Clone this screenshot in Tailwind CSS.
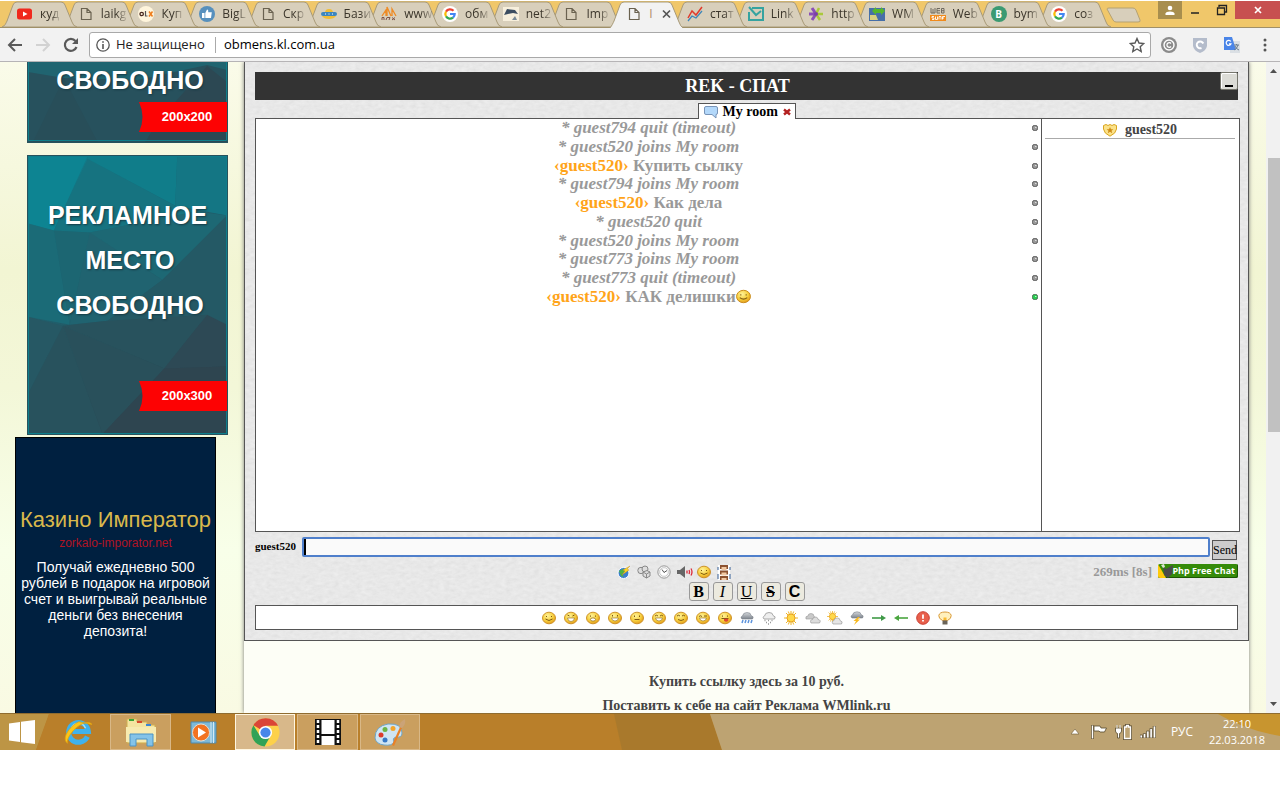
<!DOCTYPE html>
<html lang="ru">
<head>
<meta charset="utf-8">
<title>REK - СПАТ</title>
<script src="https://cdn.jsdelivr.net/npm/@tailwindcss/browser@4"></script>
</head>
<body class="bg-white font-['Liberation_Sans',sans-serif]">

<svg class="absolute size-0" aria-hidden="true">
  <defs>
    <radialGradient id="gold" cx="40%" cy="32%" r="70%"><stop offset="0" stop-color="#fff29a"/><stop offset=".6" stop-color="#f6cf3e"/><stop offset="1" stop-color="#e29a1a"/></radialGradient>
    <linearGradient id="cloudg" x1="0" y1="0" x2="0" y2="1"><stop offset="0" stop-color="#d5d8dc"/><stop offset="1" stop-color="#7d848d"/></linearGradient>
    <symbol id="tab" viewBox="0 0 75 26"><path d="M0 26C3 25 4 22 5 20L11 4Q12 1 15 1H59Q62 1 63 4L70 21Q71 25 75 26Z" fill="#d8cfbb" stroke="#a89a78"/></symbol>
    <symbol id="tabon" viewBox="0 0 75 27"><path d="M0 28C3 25 4 22 5 20L11 4Q12 1 15 1H59Q62 1 63 4L70 21Q71 25 75 28Z" fill="#f2f2f2" stroke="#a89a78"/></symbol>
    <symbol id="page" viewBox="0 0 16 16"><path d="M3.500 2.500H9L13 6.500V13.500H3.500Z M9 2.500V6.500H13" fill="none" stroke="#6a6250" stroke-width="1.200"/></symbol>
    <symbol id="google" viewBox="0 0 16 16"><circle cx="8" cy="8" r="8" fill="#fff"/><g fill="none" stroke-width="2.200"><path d="M11.500 4.800A4.700 4.700 0 0 0 4 5.600" stroke="#ea4335"/><path d="M4 5.600A4.700 4.700 0 0 0 4 10.400" stroke="#fbbc05"/><path d="M4 10.400A4.700 4.700 0 0 0 11 11.600" stroke="#34a853"/><path d="M11 11.600A4.700 4.700 0 0 0 12.700 8H8" stroke="#4285f4"/></g></symbol>
    <symbol id="face" viewBox="0 0 14 14"><ellipse cx="7" cy="7" rx="6.500" ry="5.800" fill="url(#gold)" stroke="#c98a1c" stroke-width=".9"/></symbol>
    <symbol id="smile" viewBox="0 0 14 14"><use href="#face"/><path d="M4.500 5v1M9.500 5v1M3.500 8Q7 11 10.500 8" fill="none" stroke="#805a10" stroke-width="1"/></symbol>
    <symbol id="grin" viewBox="0 0 14 14"><use href="#face"/><path d="M3.500 4l2 1M10.500 4l-2 1" stroke="#805a10"/><path d="M3.500 7H10.500Q10 10.500 7 10.500T3.500 7Z" fill="#fff" stroke="#8a641a" stroke-width=".6"/></symbol>
    <symbol id="rain" viewBox="0 0 14 14"><path d="M2 8Q-.3 6 2.500 5Q3 1.500 7 1.500T11 4.500Q14.500 5.500 12.500 8Z" fill="url(#cloudg)" stroke="#7c838b" stroke-width=".6"/></symbol>
    <symbol id="sun" viewBox="0 0 14 14"><path d="M7 0V14M0 7H14M2 2L12 12M12 2L2 12M4.300.5L9.700 13.500M9.700.5L4.300 13.500" stroke="#eeb52b" stroke-width="1"/><circle cx="7" cy="7" r="4" fill="#ffd84a" stroke="#e9a31e"/></symbol>
    <symbol id="dot" viewBox="0 0 6 6"><rect x=".5" y=".5" width="5" height="5" rx="1.800" fill="#999" stroke="#5d5d5d"/><path d="M3 2h1.500v1H3z" fill="#ddd"/></symbol>
    <linearGradient id="tealg" x1="0" y1="0" x2=".5" y2="1"><stop offset="0" stop-color="#0d8391"/><stop offset=".5" stop-color="#205f6c"/><stop offset="1" stop-color="#2e444f"/></linearGradient>
  </defs>
</svg>

<!-- tab strip -->
<header>
  <div class="flex h-7 border-t border-b border-t-white border-b-[#a09068] bg-[#f0c76a] pl-[2px] font-['Open_Sans',sans-serif] text-[12px] text-[#3b352a]">
    <nav class="flex min-w-0 flex-1" aria-label="Вкладки">
      <a href="#" class="relative z-[18] flex min-w-0 flex-1 items-center gap-[7px] pl-[15px]"><svg class="absolute left-0 top-0 h-[26px] w-[75px]"><use href="#tab"/></svg><svg class="relative size-4 shrink-0" viewBox="0 0 16 16"><rect x="0" y="2.500" width="15" height="11" rx="2.500" fill="#f0291d"/><path d="M6 5.500v5l4.500-2.500z" fill="#fff"/></svg><span class="relative shrink-0 whitespace-nowrap [mask-image:linear-gradient(90deg,#000_60%,#0003)]">куд</span></a>
      <a href="#" class="relative z-[17] flex min-w-0 flex-1 items-center gap-[7px] pl-[15px]"><svg class="absolute left-0 top-0 h-[26px] w-[75px]"><use href="#tab"/></svg><svg class="relative size-4 shrink-0"><use href="#page"/></svg><span class="relative shrink-0 whitespace-nowrap [mask-image:linear-gradient(90deg,#000_60%,#0003)]">laikg</span></a>
      <a href="#" class="relative z-[16] flex min-w-0 flex-1 items-center gap-[7px] pl-[15px]"><svg class="absolute left-0 top-0 h-[26px] w-[75px]"><use href="#tab"/></svg><svg class="relative size-4 shrink-0" viewBox="0 0 16 16"><circle cx="8" cy="8" r="8" fill="#fff5dc"/><circle cx="3.700" cy="8" r="1.700" fill="none" stroke="#4a2a20" stroke-width="1.300"/><path d="M7.500 5v5h2" fill="none" stroke="#555" stroke-width="1.200"/><path d="M11 5.500l3.500 5M14.500 5.500l-3.500 5" stroke="#ee7d1d" stroke-width="1.500"/></svg><span class="relative shrink-0 whitespace-nowrap [mask-image:linear-gradient(90deg,#000_60%,#0003)]">Куп</span></a>
      <a href="#" class="relative z-[15] flex min-w-0 flex-1 items-center gap-[7px] pl-[15px]"><svg class="absolute left-0 top-0 h-[26px] w-[75px]"><use href="#tab"/></svg><svg class="relative size-4 shrink-0" viewBox="0 0 16 16"><circle cx="8" cy="8" r="8" fill="#5790bd"/><path d="M3 7h2.500v5H3zM6.300 7L8 3.500Q9.500 3 9.300 6.300H12.800L12 12H6.300z" fill="#fff"/></svg><span class="relative shrink-0 whitespace-nowrap [mask-image:linear-gradient(90deg,#000_60%,#0003)]">BigL</span></a>
      <a href="#" class="relative z-[14] flex min-w-0 flex-1 items-center gap-[7px] pl-[15px]"><svg class="absolute left-0 top-0 h-[26px] w-[75px]"><use href="#tab"/></svg><svg class="relative size-4 shrink-0"><use href="#page"/></svg><span class="relative shrink-0 whitespace-nowrap [mask-image:linear-gradient(90deg,#000_60%,#0003)]">Скр</span></a>
      <a href="#" class="relative z-[13] flex min-w-0 flex-1 items-center gap-[7px] pl-[15px]"><svg class="absolute left-0 top-0 h-[26px] w-[75px]"><use href="#tab"/></svg><svg class="relative size-4 shrink-0" viewBox="0 0 16 16"><path d="M4 7Q4 3 8 3T12 7z" fill="#f2bd35"/><rect x="0" y="6" width="16" height="4" rx="2" fill="#3d86be"/><path d="M1 10H15Q13 13 8 13T1 10z" fill="#f2bd35"/><path d="M4 8h1M7.500 8h1M11 8h1" stroke="#fff"/></svg><span class="relative shrink-0 whitespace-nowrap [mask-image:linear-gradient(90deg,#000_60%,#0003)]">Бази</span></a>
      <a href="#" class="relative z-[12] flex min-w-0 flex-1 items-center gap-[7px] pl-[15px]"><svg class="absolute left-0 top-0 h-[26px] w-[75px]"><use href="#tab"/></svg><svg class="relative size-4 shrink-0" viewBox="0 0 16 16"><path d="M1 10L5 4v6M6 10V1l4 9M11 10V3l4 7" fill="none" stroke="#ee8b25" stroke-width="1.300"/><path d="M1 14v-2.500h2V14M5 14l1-2.500h3L8 14M11 11.500l3 2.500M14 11.500L11 14" fill="none" stroke="#7c5348"/></svg><span class="relative shrink-0 whitespace-nowrap [mask-image:linear-gradient(90deg,#000_60%,#0003)]">www</span></a>
      <a href="#" class="relative z-[11] flex min-w-0 flex-1 items-center gap-[7px] pl-[15px]"><svg class="absolute left-0 top-0 h-[26px] w-[75px]"><use href="#tab"/></svg><svg class="relative size-4 shrink-0"><use href="#google"/></svg><span class="relative shrink-0 whitespace-nowrap [mask-image:linear-gradient(90deg,#000_60%,#0003)]">обм</span></a>
      <a href="#" class="relative z-[10] flex min-w-0 flex-1 items-center gap-[7px] pl-[15px]"><svg class="absolute left-0 top-0 h-[26px] w-[75px]"><use href="#tab"/></svg><svg class="relative size-4 shrink-0" viewBox="0 0 16 16"><rect y="1" width="16" height="14" fill="#f7efdc"/><path d="M1 9L4 3l8 1 3 4-5-1-5 1z" fill="#3c4d60"/><path d="M9 14l3-4 2 4z" fill="#7a8a97"/></svg><span class="relative shrink-0 whitespace-nowrap [mask-image:linear-gradient(90deg,#000_60%,#0003)]">net2</span></a>
      <a href="#" class="relative z-[9] flex min-w-0 flex-1 items-center gap-[7px] pl-[15px]"><svg class="absolute left-0 top-0 h-[26px] w-[75px]"><use href="#tab"/></svg><svg class="relative size-4 shrink-0"><use href="#page"/></svg><span class="relative shrink-0 whitespace-nowrap [mask-image:linear-gradient(90deg,#000_60%,#0003)]">Imp</span></a>
      <a href="#" aria-current="page" class="relative z-20 flex min-w-0 flex-1 items-center gap-[7px] pl-[17px]"><svg class="absolute left-0 top-0 h-[27px] w-[75px]"><use href="#tabon"/></svg><svg class="relative size-4 shrink-0"><use href="#page"/></svg><span class="relative shrink-0 text-[#b08a6a]">I</span><svg class="relative size-3 shrink-0" viewBox="0 0 12 12"><path d="M3 2.500l7 7M10 2.500l-7 7" stroke="#555" stroke-width="1.700"/></svg></a>
      <a href="#" class="relative z-[8] flex min-w-0 flex-1 items-center gap-[7px] pl-[15px]"><svg class="absolute left-0 top-0 h-[26px] w-[75px]"><use href="#tab"/></svg><svg class="relative size-4 shrink-0" viewBox="0 0 16 16"><path d="M1 12L5 5l4 4 6-8" fill="none" stroke="#e03a2c" stroke-width="1.500"/><path d="M1 15l4-5 4 2 6-7" fill="none" stroke="#3e86b8" stroke-width="1.300"/></svg><span class="relative shrink-0 whitespace-nowrap [mask-image:linear-gradient(90deg,#000_60%,#0003)]">стат</span></a>
      <a href="#" class="relative z-[7] flex min-w-0 flex-1 items-center gap-[7px] pl-[15px]"><svg class="absolute left-0 top-0 h-[26px] w-[75px]"><use href="#tab"/></svg><svg class="relative size-4 shrink-0" viewBox="0 0 16 16"><path d="M1 6V14H15V2H4M1 1l7 8 5-4" fill="none" stroke="#35a3a0" stroke-width="2"/></svg><span class="relative shrink-0 whitespace-nowrap [mask-image:linear-gradient(90deg,#000_60%,#0003)]">Link</span></a>
      <a href="#" class="relative z-[6] flex min-w-0 flex-1 items-center gap-[7px] pl-[15px]"><svg class="absolute left-0 top-0 h-[26px] w-[75px]"><use href="#tab"/></svg><svg class="relative size-4 shrink-0" viewBox="0 0 16 16"><path d="M8 8H1M8 8L4 2M8 8L4 14" stroke="#8a4fb8" stroke-width="3"/><path d="M8 8h7M8 8l3-6M8 8l4 6" stroke="#a9c93a" stroke-width="2.500"/><circle cx="8" cy="8" r="2" fill="#7b3fa8"/></svg><span class="relative shrink-0 whitespace-nowrap [mask-image:linear-gradient(90deg,#000_60%,#0003)]">http</span></a>
      <a href="#" class="relative z-[5] flex min-w-0 flex-1 items-center gap-[7px] pl-[15px]"><svg class="absolute left-0 top-0 h-[26px] w-[75px]"><use href="#tab"/></svg><svg class="relative size-4 shrink-0" viewBox="0 0 16 16"><rect y="2" width="16" height="13" fill="#466fa8"/><path d="M1 9h6l2 5H1z" fill="#d8d080"/><path d="M3 5l4-4v2h5V1l4 4-4 4V7H7v2z" fill="#55b62c"/></svg><span class="relative shrink-0 whitespace-nowrap [mask-image:linear-gradient(90deg,#000_60%,#0003)]">WM</span></a>
      <a href="#" class="relative z-[4] flex min-w-0 flex-1 items-center gap-[7px] pl-[15px]"><svg class="absolute left-0 top-0 h-[26px] w-[75px]"><use href="#tab"/></svg><svg class="relative size-4 shrink-0" viewBox="0 0 16 16"><path d="M1 2v5h4V2M3 3v4M10 2.500H7V7h3M7 4.700h3M11.500 2.500H14V7h-2.500zM11.500 4.700H14" fill="none" stroke="#6f6a60"/><rect y="9" width="16" height="6" fill="#f08a1c"/><path d="M4 10.500H2V12h2v1.500H2M5.500 10.500v3h2v-3M9 13.500v-3h2v3M12.500 13.500v-3H15M12.500 12H14" fill="none" stroke="#fff" stroke-width=".9"/></svg><span class="relative shrink-0 whitespace-nowrap [mask-image:linear-gradient(90deg,#000_60%,#0003)]">Web</span></a>
      <a href="#" class="relative z-[3] flex min-w-0 flex-1 items-center gap-[7px] pl-[15px]"><svg class="absolute left-0 top-0 h-[26px] w-[75px]"><use href="#tab"/></svg><span class="relative grid size-4 shrink-0 place-items-center rounded-full bg-[#3c9a72] text-[10px] font-bold text-white">B</span><span class="relative shrink-0 whitespace-nowrap [mask-image:linear-gradient(90deg,#000_60%,#0003)]">bym</span></a>
      <a href="#" class="relative z-[2] flex min-w-0 flex-1 items-center gap-[7px] pl-[15px]"><svg class="absolute left-0 top-0 h-[26px] w-[75px]"><use href="#tab"/></svg><svg class="relative size-4 shrink-0"><use href="#google"/></svg><span class="relative shrink-0 whitespace-nowrap [mask-image:linear-gradient(90deg,#000_60%,#0003)]">соз</span></a>
    </nav>
    <div class="flex w-[183px] shrink-0 items-start">
      <button aria-label="Новая вкладка" class="ml-[9px] mt-[6px]"><svg class="h-4 w-9" viewBox="0 0 36 16"><path d="M1 2Q1 1 3 1H27Q29 1 30 3L34 13Q35 15 32 15H10Q8 15 7 13Z" fill="#d8cfbb" stroke="#b5a273"/></svg></button>
      <button aria-label="Профиль" class="ml-4 grid h-[18px] w-6 place-items-center bg-[#a88e4e]"><svg class="size-3" viewBox="0 0 12 12"><circle cx="6" cy="4" r="2.300" fill="#fff"/><path d="M1.500 11V9.500Q2 7.500 6 7.500T10.500 9.500V11z" fill="#fff"/></svg></button>
      <button aria-label="Свернуть" class="grid h-[18px] w-[26px] place-items-center"><svg class="size-2" viewBox="0 0 8 8"><path d="M0 7H8" stroke="#222" stroke-width="1.500"/></svg></button>
      <button aria-label="Развернуть" class="grid h-[18px] w-[27px] place-items-center"><svg class="size-3" viewBox="0 0 12 12"><path d="M3 3V1.500H10.500V8H9M1.500 4H8.500V10.500H1.500Z" fill="none" stroke="#222" stroke-width="1.300"/></svg></button>
      <button aria-label="Закрыть" class="grid h-[18px] flex-1 place-items-center bg-[#c75050]"><svg class="size-2" viewBox="0 0 8 8"><path d="M1 1l6 6M7 1L1 7" stroke="#fff" stroke-width="1.700"/></svg></button>
    </div>
  </div>

  <!-- toolbar -->
  <div class="flex h-[34px] items-center border-b border-[#b6b4b6] bg-[#f2f2f2] pl-[7px] pr-2">
    <button aria-label="Назад" class="size-4"><svg viewBox="0 0 16 16"><path d="M8 2L2 8l6 6M2 8H15" fill="none" stroke="#5a5a5a" stroke-width="2"/></svg></button>
    <button aria-label="Вперёд" class="ml-3 size-4"><svg viewBox="0 0 16 16"><path d="M8 2l6 6-6 6M14 8H1" fill="none" stroke="#d2d2d2" stroke-width="2"/></svg></button>
    <button aria-label="Обновить" class="ml-3 size-4"><svg viewBox="0 0 16 16"><path d="M13.500 10A6 6 0 1 1 12.500 4" fill="none" stroke="#5a5a5a" stroke-width="2.200"/><path d="M15 1v6H9z" fill="#5a5a5a"/></svg></button>
    <div class="ml-[10px] flex h-[26px] min-w-0 flex-1 items-center rounded-[3px] border border-[#a9a9a9] bg-white pl-[6px] pr-[5px] font-['Open_Sans',sans-serif] text-[13px]">
      <svg class="size-[14px] shrink-0" viewBox="0 0 14 14"><circle cx="7" cy="7" r="6.200" fill="none" stroke="#555" stroke-width="1.300"/><path d="M7 6v5M7 3.300v1.400" stroke="#555" stroke-width="1.600"/></svg>
      <span class="ml-[6px] w-[91px] shrink-0 whitespace-nowrap text-[#222]">Не защищено</span>
      <span class="mx-2 h-4 w-px bg-[#aaa]"></span>
      <input aria-label="Адрес" value="obmens.kl.com.ua" class="min-w-0 flex-1 bg-transparent text-black outline-none">
      <svg class="size-4 shrink-0" viewBox="0 0 16 16"><path d="M8 1.500l2 4.500 4.800.5-3.600 3.200 1 4.800L8 12l-4.200 2.500 1-4.800L1.200 6.500 6 6z" fill="none" stroke="#5a5a5a" stroke-width="1.400"/></svg>
    </div>
    <svg class="ml-[10px] size-4 shrink-0" viewBox="0 0 16 16"><circle cx="8" cy="8" r="8" fill="#8b8b8b"/><circle cx="8" cy="8" r="5" fill="none" stroke="#fff" stroke-width="1.400"/><path d="M10 6.500A2.300 2.300 0 1 0 10 9.500" fill="none" stroke="#fff" stroke-width="1.300"/></svg>
    <svg class="ml-[15px] size-4 shrink-0" viewBox="0 0 16 16"><path d="M1 1H15V9Q14 14 8 16 2 14 1 9z" fill="#b4bccb"/><path d="M9.500 11A3.400 3.400 0 1 1 11.300 6.500" fill="none" stroke="#fff" stroke-width="2"/></svg>
    <svg class="ml-4 size-4 shrink-0" viewBox="0 0 16 16"><rect x="6" y="4" width="10" height="12" fill="#dadfe4"/><path d="M0 0H8L12 13H0z" fill="#4a85e8"/><path d="M6.800 4.500A2.500 2.500 0 1 0 7 6.800H5" fill="none" stroke="#fff" stroke-width="1.200"/><path d="M10 8h5M12.500 7v1M14 8q-1 4-4 5M11 9q1 3 4 4" fill="none" stroke="#6a7c8c"/></svg>
    <button aria-label="Меню" class="ml-[18px] h-4 w-[14px]"><svg viewBox="0 0 14 16"><g fill="#555"><circle cx="7" cy="3" r="1.500"/><circle cx="7" cy="8" r="1.500"/><circle cx="7" cy="13" r="1.500"/></g></svg></button>
  </div>
</header>

<!-- page -->
<div class="flex overflow-hidden bg-[linear-gradient(#fafbe9,#f2f5d3_32%,#f3f7d8_50%,#f8ffe9_75%,#f9fae3)]">
  <aside class="flex w-[244px] shrink-0 flex-col font-bold">
    <a href="#" class="relative ml-[27px] block h-[81px] w-[201px] overflow-hidden border border-t-0 border-[#27525d] text-center text-white">
      <svg class="absolute inset-0 size-full" viewBox="0 0 200 80" preserveAspectRatio="none"><rect width="200" height="80" fill="#27515d"/><path d="M0 0H200V8L180 3 110 18 36 16 0 10z" fill="#206470"/><path d="M36 16L70 80H5z" fill="#284e59"/><path d="M130 60L180 4 200 20V80H118z" fill="#2c4853"/><path d="M.5 0V78.500H199.500V0" fill="none" stroke="#0f7f8c"/></svg>
      <span class="relative block pl-[5px] pt-[1px] text-[25px] leading-[34px] [text-shadow:1px_1px_2px_#173a44]">СВОБОДНО</span>
      <span class="absolute bottom-[10px] right-0 h-[30px] w-[88px] bg-[#fd0203] pl-2 text-[13px] leading-[30px] [clip-path:polygon(0_0,100%_0,100%_100%,0_100%,3%_75%,4%_50%,3%_25%)]">200x200</span>
    </a>
    <a href="#" class="relative ml-[27px] mt-3 block h-[280px] w-[201px] overflow-hidden border border-[#27525d] text-center text-white">
      <svg class="absolute inset-0 size-full" viewBox="0 0 200 280" preserveAspectRatio="none"><rect width="200" height="280" fill="url(#tealg)"/><path d="M0 0H60L26 75 0 68z" fill="#0d8492"/><path d="M60 0H150L148 50 60 3z" fill="#107d8a"/><path d="M60 3L148 50 170 56 62 77 26 75z" fill="#167380"/><path d="M150 0H200V60L148 50z" fill="#147684"/><path d="M62 77L135 125 200 60 170 56z" fill="#1d6874"/><path d="M0 68L26 75 42 170 0 162z" fill="#1b6b77"/><path d="M26 75L62 77 42 170z" fill="#1c6672"/><path d="M62 77L135 125 80 166 42 170z" fill="#206370"/><path d="M135 125L200 60V170L80 166z" fill="#245965"/><path d="M0 162L35 171 0 240z" fill="#265864"/><path d="M35 171L80 166 180 160 137 214z" fill="#28525d"/><path d="M35 171L0 240V280H75z" fill="#28525d"/><path d="M35 171L137 214 75 280z" fill="#29505b"/><path d="M137 214L180 160 200 170V212z" fill="#2d4955"/><path d="M137 214L200 212V280H75z" fill="#2e4550"/><rect x=".5" y=".5" width="199" height="279" fill="none" stroke="#0f7f8c"/></svg>
      <span class="relative block pt-[37px] text-[25px] leading-[45px] [text-shadow:1px_1px_2px_#173a44]">РЕКЛАМНОЕ<br><span class="pl-[5px]">МЕСТО</span><br><span class="pl-[5px]">СВОБОДНО</span></span>
      <span class="absolute bottom-[23px] right-0 h-[30px] w-[88px] bg-[#fd0203] pl-2 text-[13px] leading-[30px] [clip-path:polygon(0_0,100%_0,100%_100%,0_100%,3%_75%,4%_50%,3%_25%)]">200x300</span>
    </a>
    <a href="#" class="ml-[15px] mt-[2px] block w-[201px] flex-1 border border-b-0 border-black bg-[#002040] pt-[70px] text-center font-normal text-white">
      <span class="block text-[22px] leading-6 whitespace-nowrap text-[#d9b84c]">Казино Император</span>
      <span class="block text-[12px] leading-[22px] text-[#b01424]">zorkalo-imporator.net</span>
      <span class="block px-1 pt-[5px] text-[14px] leading-4">Получай ежедневно 500 рублей в подарок на игровой счет и выигрывай реальные деньги без внесения депозита!</span>
    </a>
  </aside>

  <main class="min-w-0 flex-1 bg-[#fdfef6] font-['Liberation_Serif',serif] font-bold shadow-[0_0_4px_#777]">
    <section class="relative border-x border-b border-[#555] bg-[#e6e6e6] px-[10px] pb-[10px] pt-[10px]">
      <svg class="absolute inset-0 size-full opacity-30" aria-hidden="true"><filter id="paper"><feTurbulence type="fractalNoise" baseFrequency=".18 .3" numOctaves="3"/><feColorMatrix values=".3 .3 0 0 .55  .3 .3 0 0 .55  .3 .3 0 0 .55  0 0 0 0 1"/></filter><rect width="100%" height="100%" filter="url(#paper)"/></svg>
      <div class="relative">
        <div class="flex h-7 items-start bg-[#333] text-white">
          <h1 class="flex-1 text-center text-[18px] leading-[29px]">REK - СПАТ</h1>
          <button aria-label="Свернуть чат" class="flex size-[18px] items-end justify-center rounded-[2px] border border-[#77776d] bg-[#dcdcd6] pb-[2px] shadow-[inset_1px_1px_#fff]"><span class="h-[2px] w-2 bg-black"></span></button>
        </div>
        <div class="relative z-10 flex justify-center pt-[3px]">
          <div class="-mb-px flex h-4 w-[98px] items-center gap-[5px] border border-b-0 border-[#555] bg-white pl-[5px] text-[14px] leading-[14px]">
            <svg class="size-[14px] shrink-0" viewBox="0 0 14 14"><path d="M2 1.500H12Q13.500 1.500 13.500 3V8Q13.500 9.500 12 9.500V13L8 9.500H2Q.5 9.500 .5 8V3Q.5 1.500 2 1.500Z" fill="#b3d8fa" stroke="#7894b8"/></svg>
            <span class="whitespace-nowrap">My room</span>
            <button aria-label="Закрыть комнату" class="size-2"><svg viewBox="0 0 8 8"><path d="M1 1.500l6 5M7 1.500l-6 5" stroke="#b32020" stroke-width="2.400"/></svg></button>
          </div>
        </div>
        <div class="-mr-[2px] flex h-[414px] border border-[#555] bg-white">
          <div class="min-w-0 flex-1">
            <ul class="grid h-[187px] auto-rows-fr pl-[9px] text-center text-[17px] leading-[18px] text-[#999]">
              <li class="flex items-center"><i class="flex-1">* guest794 quit (timeout)</i><svg class="mr-[3px] size-[6px]"><use href="#dot"/></svg></li>
              <li class="flex items-center"><i class="flex-1">* guest520 joins My room</i><svg class="mr-[3px] size-[6px]"><use href="#dot"/></svg></li>
              <li class="flex items-center"><span class="flex-1"><span class="text-[#ffa419]">‹guest520›</span> Купить сылку</span><svg class="mr-[3px] size-[6px]"><use href="#dot"/></svg></li>
              <li class="flex items-center"><i class="flex-1">* guest794 joins My room</i><svg class="mr-[3px] size-[6px]"><use href="#dot"/></svg></li>
              <li class="flex items-center"><span class="flex-1"><span class="text-[#ffa419]">‹guest520›</span> Как дела</span><svg class="mr-[3px] size-[6px]"><use href="#dot"/></svg></li>
              <li class="flex items-center"><i class="flex-1">* guest520 quit</i><svg class="mr-[3px] size-[6px]"><use href="#dot"/></svg></li>
              <li class="flex items-center"><i class="flex-1">* guest520 joins My room</i><svg class="mr-[3px] size-[6px]"><use href="#dot"/></svg></li>
              <li class="flex items-center"><i class="flex-1">* guest773 joins My room</i><svg class="mr-[3px] size-[6px]"><use href="#dot"/></svg></li>
              <li class="flex items-center"><i class="flex-1">* guest773 quit (timeout)</i><svg class="mr-[3px] size-[6px]"><use href="#dot"/></svg></li>
              <li class="flex items-center"><span class="flex flex-1 items-center justify-center"><span><span class="text-[#ffa419]">‹guest520›</span> КАК делишки</span><svg class="size-[15px]"><use href="#smile"/></svg></span><svg class="mr-[3px] size-[6px]" viewBox="0 0 6 6"><rect x=".5" y=".5" width="5" height="5" rx="1.800" fill="#28cf50" stroke="#4e7058"/><path d="M3 2h1.500v1H3z" fill="#b8f5c6"/></svg></li>
            </ul>
          </div>
          <div class="w-[198px] shrink-0 border-l border-[#555] pl-[3px] pr-1 pt-[2px]">
            <div class="flex h-[18px] items-center justify-center gap-2 border-b border-[#aaa] text-[14px] leading-[14px] text-[#444]">
              <svg class="size-[14px]" viewBox="0 0 14 14"><path d="M.5 2.500L3 1.500 5 2.500 7 1.500 9 2.500 11 1.500 13.500 2.500V6Q13 10.500 7 13.200Q1 10.500 .5 6Z" fill="#fbe28a" stroke="#d9a51f"/><path d="M7 4l1 2.200h2.400L8.500 7.800l.8 2.400L7 8.800 4.700 10.200l.8-2.400L3.600 6.200H6z" fill="#cf8c14"/></svg>
              <span>guest520</span>
            </div>
          </div>
        </div>
        <form class="flex pt-[5px]">
          <label for="msg" class="w-[47px] shrink-0 text-[11px] leading-[18px]">guest520</label>
          <input id="msg" class="h-5 min-w-0 flex-1 rounded-[2px] border-2 border-[#4f7fcb] bg-[#fafafa] px-1 text-[13px] shadow-[inset_2px_0_#000] outline-none">
          <button type="button" class="ml-[2px] mr-px mt-[3px] h-5 w-[25px] shrink-0 border border-[#555] bg-[#ccc] text-[12px] leading-4 font-normal whitespace-nowrap text-black">Send</button>
        </form>
        <div class="flex h-[22px] items-center">
          <div class="flex flex-1 justify-center gap-[6px] pt-[2px]">
            <button aria-label="Соединение"><svg class="size-[14px]" viewBox="0 0 14 14"><circle cx="6.500" cy="8" r="5.500" fill="#3b7ed0" stroke="#fff"/><path d="M2 6l4-2 2 3-3 2 2 3-3-1z" fill="#4eb343"/><path d="M13 1L6 5l2 1-3 4 7-5-2-1z" fill="#ffd51f" stroke="#c48a12" stroke-width=".4"/></svg></button>
            <button aria-label="Цвет ников"><svg class="size-[14px]" viewBox="0 0 14 14"><g fill="#ddd" stroke="#888"><circle cx="4" cy="5.500" r="3.200"/><circle cx="8" cy="4" r="3"/><path d="M6 7l4-1.500L13 7v4l-3.500 2L6 11z"/></g><path d="M6 7l3.500 2L13 7M9.500 9v4" stroke="#888" fill="none"/></svg></button>
            <button aria-label="Время"><svg class="size-[14px]" viewBox="0 0 14 14"><circle cx="7" cy="7" r="6.200" fill="#f4f4f4" stroke="#999"/><circle cx="7" cy="7" r="4.300" fill="#fff" stroke="#aaa" stroke-width=".6"/><path d="M5 4.500L7 7.500 10 5.500" fill="none" stroke="#555"/></svg></button>
            <button aria-label="Звук"><svg class="-mr-[2px] h-[14px] w-4" viewBox="0 0 16 14"><path d="M0 5h3l5-4v12L3 9H0z" fill="#666"/><path d="M10 5.500v3M12 5q1 2 0 4M14 3.500q2 3.500 0 7" fill="none" stroke="#dc2c3c" stroke-width="1.300"/></svg></button>
            <button aria-label="Смайлы"><svg class="size-[14px]"><use href="#smile"/></svg></button>
            <button aria-label="Пользователи"><svg class="h-[15px] w-[14px]" viewBox="0 0 14 15"><path d="M1 0H13V15H1z" fill="#fff"/><path d="M3 0H11V4H3zM3 5.500H11V9.500H3zM3 11H11V15H3z" fill="#8c5230"/><path d="M4.500 2H9.500V5H4.500zM4.500 7.500H9.500V10.500H4.500zM4.500 13H9.500V15H4.500z" fill="#f1c9a3"/><path d="M1 2v3M1 9v5M13 2v3M13 9v5" stroke="#345f95"/></svg></button>
          </div>
          <span class="pt-[2px] text-[13px] text-[#999]">269ms [8s]</span>
          <a href="#" class="relative ml-[6px] flex h-[14px] w-20 items-center justify-end overflow-hidden rounded-[2px] bg-[#358b09] pr-[3px] font-['Open_Sans',sans-serif] text-[9px] leading-[14px] whitespace-nowrap text-white shadow-[inset_-1px_-1px_#1d5604]"><svg class="absolute left-0 top-0 h-[14px] w-4" viewBox="0 0 16 14"><path d="M0 0L8 14H0z" fill="#ffca0b"/><path d="M5 2l3 3 7-4-1 9-4 4-4-3z" fill="#4b4b4b"/><path d="M3 1l3-1 1 3-2 1z" fill="#dbe8d0"/></svg>Php Free Chat</a>
        </div>
        <div class="flex justify-center gap-1 text-[16px] leading-[17px] text-black">
          <button class="h-[19px] w-5 rounded-[3px] border border-[#999] bg-[#eceadf]">B</button>
          <button class="h-[19px] w-5 rounded-[3px] border border-[#999] bg-[#eceadf] font-normal italic">I</button>
          <button class="h-[19px] w-5 rounded-[3px] border border-[#999] bg-[#eceadf] font-normal underline">U</button>
          <button class="h-[19px] w-5 rounded-[3px] border border-[#999] bg-[#eceadf] line-through">S</button>
          <button class="h-[19px] w-5 rounded-[3px] border border-[#999] bg-[#eceadf] font-['Liberation_Sans',sans-serif]">C</button>
        </div>
        <div class="mt-1 flex h-[25px] items-center justify-center gap-2 border border-[#555] bg-white">
          <svg class="size-[14px]"><use href="#smile"/></svg>
          <svg class="size-[14px]"><use href="#grin"/></svg>
          <svg class="size-[14px]" viewBox="0 0 14 14"><use href="#face"/><path d="M4.500 4.500v1.200M9.500 4.500v1.200" stroke="#805a10"/><ellipse cx="7" cy="8.500" rx="2.600" ry="1.600" fill="#fff" stroke="#8a641a" stroke-width=".7"/></svg>
          <svg class="size-[14px]" viewBox="0 0 14 14"><use href="#face"/><path d="M4.500 4v1.500M9.500 4v1.500" stroke="#805a10"/><path d="M3.500 7H10.500Q10 10 7 10T3.500 7Z" fill="#fff" stroke="#8a641a" stroke-width=".6"/></svg>
          <svg class="size-[14px]" viewBox="0 0 14 14"><use href="#face"/><path d="M4.500 4.500v1.500M9.500 4.500v1.500M4.500 8.500H9.500" stroke="#805a10"/></svg>
          <svg class="size-[14px]" viewBox="0 0 14 14"><use href="#face"/><path d="M3 5q1.500-1.500 3 0M8 5q1.500-1.500 3 0" fill="none" stroke="#805a10"/><path d="M3.500 7H10.500Q10 10 7 10T3.500 7Z" fill="#fff" stroke="#8a641a" stroke-width=".6"/></svg>
          <svg class="size-[14px]" viewBox="0 0 14 14"><use href="#face"/><path d="M3 5q1.500-1.500 3 0M8 5q1.500-1.500 3 0M4 8.500Q7 10.500 10 8.500" fill="none" stroke="#805a10"/></svg>
          <svg class="size-[14px]" viewBox="0 0 14 14"><use href="#face"/><path d="M3 5.500q1.500-1.500 3 0M8 5h3" fill="none" stroke="#805a10"/><path d="M3.500 7H10.500Q10 10 7 10T3.500 7Z" fill="#fff" stroke="#8a641a" stroke-width=".6"/></svg>
          <svg class="size-[14px]" viewBox="0 0 14 14"><use href="#face"/><path d="M4.500 4.500v1.200M9.500 4.500v1.200M3.500 7.500H10.500" stroke="#805a10"/><path d="M6 7.800h4.200v2q-2 2-4.200 0z" fill="#e0452f"/></svg>
          <svg class="size-[14px]" viewBox="0 0 14 14"><use href="#rain"/><path d="M3 9l-1 3M6 9l-1 3M9 9l-1 3M12 9l-1 3" stroke="#5d93dc" stroke-width="1.500"/></svg>
          <svg class="size-[14px]" viewBox="0 0 14 14"><path d="M2 8Q-.3 6 2.500 5Q3 1.500 7 1.500T11 4.500Q14.500 5.500 12.500 8Z" fill="#eee" stroke="#aaa"/><path d="M2.500 9.500h1M6 9.500h1M9.500 9.500h1M4 11.500h1M8 11.500h1M6 13h1" stroke="#999" stroke-width="1.400"/></svg>
          <svg class="size-[14px]"><use href="#sun"/></svg>
          <svg class="-mx-px h-[14px] w-4" viewBox="0 0 16 14"><path d="M1 8Q0 5 3 5 3 2.500 6 2.500T9 5.500Q11 6 10 8z" fill="#c9c9c9" stroke="#999" stroke-width=".6"/><path d="M6 12Q4.500 9 7.500 8.500 8 5.500 11 6 13 6.500 13 8.500 16.500 9 14.500 12z" fill="#dcdcdc" stroke="#909090" stroke-width=".6"/></svg>
          <svg class="-mx-px h-[14px] w-4" viewBox="0 0 16 14"><use href="#sun" width="11" height="11"/><path d="M6 13Q4 10 7 9.500 7.500 6.500 10.500 7 13 7 13 9.500 16.500 10.500 14.500 13z" fill="#e5e5e5" stroke="#909090" stroke-width=".6"/></svg>
          <svg class="size-[14px]" viewBox="0 0 14 14"><path d="M2 7Q-.3 5 2.500 4Q3 .8 7 .8T11 3.500Q14.500 4.500 12.500 7Z" fill="url(#cloudg)" stroke="#7c838b" stroke-width=".6"/><path d="M8 6L3.500 10H6L4 14l6-5.500H7.500L10 6z" fill="#f7b81f"/></svg>
          <svg class="size-[14px]" viewBox="0 0 14 14"><path d="M0 7H10" stroke="#3f9a47" stroke-width="1.600"/><path d="M9 4l5 3-5 3z" fill="#3f9a47"/></svg>
          <svg class="size-[14px]" viewBox="0 0 14 14"><path d="M4 7H14" stroke="#4aa63f" stroke-width="1.600"/><path d="M5 4L0 7l5 3z" fill="#4aa63f"/></svg>
          <svg class="size-[14px]" viewBox="0 0 14 14"><circle cx="7" cy="7" r="6.300" fill="#e8604c" stroke="#cb4034"/><path d="M7 3.500v4.200M7 9v1.600" stroke="#fff" stroke-width="1.800"/></svg>
          <svg class="size-[14px]" viewBox="0 0 14 14"><path d="M4.500 9.500Q.5 7.500 .8 4.500 1.500 1 7 1T13.200 4.500Q13.500 7.500 9.500 9.500z" fill="#fff0bd" stroke="#d99a3a"/><path d="M4.500 9.500h5v4h-5z" fill="#6a6459"/><path d="M5.500 9V6.500h3V9" fill="#f8b930"/></svg>
        </div>
      </div>
    </section>
    <div class="overflow-hidden pt-[29px] text-center text-[14px] leading-6 text-[#444]">
      <p>Купить ссылку здесь за 10 руб.</p>
      <p class="-mb-[5px]">Поставить к себе на сайт <a href="#">Реклама WMlink.ru</a></p>
    </div>
  </main>

  <!-- scrollbar -->
  <div class="ml-[17px] flex w-[14px] shrink-0 flex-col items-end bg-[#f1f1f1]">
    <svg class="mr-[3px] mt-[7px] h-1 w-[7px]" viewBox="0 0 7 4"><path d="M3.500 0L7 4H0z" fill="#505050"/></svg>
    <div class="mt-[85px] h-[274px] w-3 bg-[#c1c1c1]"></div>
    <svg class="mb-[7px] mr-[3px] mt-auto h-1 w-[7px]" viewBox="0 0 7 4"><path d="M3.500 4L7 0H0z" fill="#505050"/></svg>
  </div>
</div>

<!-- taskbar -->
<footer class="relative flex h-[37px] items-stretch border-t border-[#8f6c30] bg-[#b8802c] font-['Open_Sans',sans-serif] text-white">
  <svg class="absolute inset-0 size-full" viewBox="0 0 1280 36" preserveAspectRatio="none" aria-hidden="true"><path d="M0 0H49L36 36H0z" fill="#bd9545"/><path d="M49 0H614L622 36H36z" fill="#b97f2a"/><path d="M614 0H710L722 36H622z" fill="#a9792c"/><path d="M710 0H1280V36H722z" fill="#bda372"/><path d="M1218 0Q1245 16 1280 22V0z" fill="#c8952f"/></svg>
  <div class="relative flex flex-1 items-stretch">
    <button aria-label="Пуск" class="grid w-[44px] place-items-center"><svg class="h-6 w-7" viewBox="0 0 28 24"><path d="M1 3.500L12 2v20L1 20.500zM13 1.800L27 0v24l-14-1.800z" fill="#fff"/></svg></button>
    <button aria-label="Internet Explorer" class="ml-[3px] grid w-[61px] place-items-center"><svg class="size-[30px]" viewBox="0 0 32 32"><path d="M26 21A10.500 10.500 0 1 1 27 15.500H10" fill="none" stroke="#3fb2ec" stroke-width="5.500"/><path d="M24 12A8 8 0 0 0 9 12" fill="none" stroke="#a5e4fb" stroke-width="1.500"/><path d="M5 28C-2 24 6 10 17 5T31 8C28 4 22 6 16 10S3 24 5 28Z" fill="#fbc618" stroke="#e0a010" stroke-width=".8"/></svg></button>
    <button aria-label="Проводник" class="ml-[2px] grid w-[61px] place-items-center border border-[#d9b887] bg-white/25"><svg class="h-[30px] w-8" viewBox="0 0 32 30"><path d="M2 2H12V5H22V8H30V26H2z" fill="#f4e5a0" stroke="#cfae52"/><path d="M4 3h5" stroke="#3aa635" stroke-width="2"/><path d="M12 5h5" stroke="#d84a2c" stroke-width="2"/><path d="M21 8h5" stroke="#3a86d5" stroke-width="2"/><path d="M1 10H31V25H1z" fill="#f7ebb0"/><path d="M5 29V17H28V29H22V22H11V29z" fill="#83c3e8" stroke="#4b93c4"/></svg></button>
    <button aria-label="Медиаплеер" class="grid w-[64px] place-items-center"><svg class="h-6 w-[27px]" viewBox="0 0 27 24"><path d="M1 2L26 2V23L1 23z" fill="#7db9d8" stroke="#4e89ad"/><path d="M21 2v21M23.500 2v21" stroke="#d5eaf5"/><circle cx="11" cy="12.500" r="8.500" fill="#f27321" stroke="#e3dfd5"/><path d="M8 7.500v10l8-5z" fill="#fff"/></svg></button>
    <button aria-label="Chrome" class="grid w-[60px] place-items-center border border-[#fff6e0] bg-white/45"><svg class="size-[29px]" viewBox="0 0 30 30"><circle cx="15" cy="15" r="14.500" fill="#fdd14a"/><path d="M15 15L2.500 7.500A14.500 14.500 0 0 1 28 8H15z" fill="#da4537"/><path d="M2.500 7.500A14.500 14.500 0 0 0 14 29.500L20.500 18 15 15 9 18z" fill="#31a257"/><circle cx="15" cy="15" r="6.800" fill="#fff"/><circle cx="15" cy="15" r="5.300" fill="#4787e9"/></svg></button>
    <button aria-label="Видео" class="ml-[2px] grid w-[61px] place-items-center border border-[#d9b887] bg-white/25"><svg class="size-[26px]" viewBox="0 0 26 26"><rect width="26" height="26" fill="#111"/><path d="M6.500 1h13v14h-13zM6.500 17h13v9h-13z" fill="#fff"/><path d="M3 1V26M23 1V26" stroke="#fff" stroke-width="2.500" stroke-dasharray="3 2"/></svg></button>
    <button aria-label="Paint" class="ml-[2px] grid w-[60px] place-items-center border border-[#d9b887] bg-white/25"><svg class="h-[29px] w-8" viewBox="0 0 32 29"><path d="M1 20Q1 8 14 6 28 5 28 15 28 20 22 19 18 20 20 24 18 28 10 27 2 26 1 20Z" fill="#cfe5f3" stroke="#6fa5c6"/><circle cx="7" cy="17" r="2.500" fill="#db3b2c"/><circle cx="11" cy="11.500" r="2.500" fill="#6cb445"/><circle cx="19" cy="10.500" r="2.500" fill="#f3a52b"/><circle cx="11" cy="22" r="2.500" fill="#3678c7"/><path d="M18 27L26 9l2 1-8 18z" fill="#e98126"/><path d="M25.500 9Q25 4 31 1q1 6-3 9z" fill="#cba377"/></svg></button>
  </div>
  <div class="relative flex items-center pr-[15px] text-[11px]">
    <svg class="h-[6px] w-2" viewBox="0 0 8 6"><path d="M4 0L8 5H0z" fill="#fff" stroke="#6f5c34" stroke-width=".6"/></svg>
    <svg class="ml-[12px] size-4" viewBox="0 0 16 16"><path d="M1.500 1V15" stroke="#54462a" stroke-width="2.600"/><path d="M1.500 1.500V14.500" stroke="#fff" stroke-width="1.400"/><path d="M3 2h6l1 2h5.500l-2 4H9L8 7H3z" fill="#fff" stroke="#54462a" stroke-width=".8"/></svg>
    <svg class="ml-[8px] h-4 w-[17px]" viewBox="0 0 17 16"><path d="M2 1v3M5 1v3M.5 4h6v3q0 2-2 2.500V14h-2V9.500Q.5 9 .5 7z" fill="#fff" stroke="#54462a" stroke-width=".8"/><path d="M2 1v3M5 1v3" stroke="#fff"/><path d="M9.500 3H11.500V1.500H13.500V3H15.500V14.500H9.500z" fill="none" stroke="#54462a" stroke-width="2.800"/><path d="M9.500 3H11.500V1.500H13.500V3H15.500V14.500H9.500z" fill="#bda372" stroke="#fff" stroke-width="1.400"/></svg>
    <svg class="ml-[8px] h-3 w-4" viewBox="0 0 16 12"><path d="M0 9h2.500v3H0zM3.300 7.500h2.500V12H3.300zM6.600 5h2.500v7H6.600zM9.900 2.500h2.500V12H9.900zM13.200 0h2.500v12h-2.500z" fill="#fff" stroke="#54462a" stroke-width=".7"/></svg>
    <span class="ml-[15px] w-6 text-[12px]">РУС</span>
    <time class="ml-[14px] text-center leading-4">22:10<br>22.03.2018</time>
  </div>
</footer>
</body>
</html>
